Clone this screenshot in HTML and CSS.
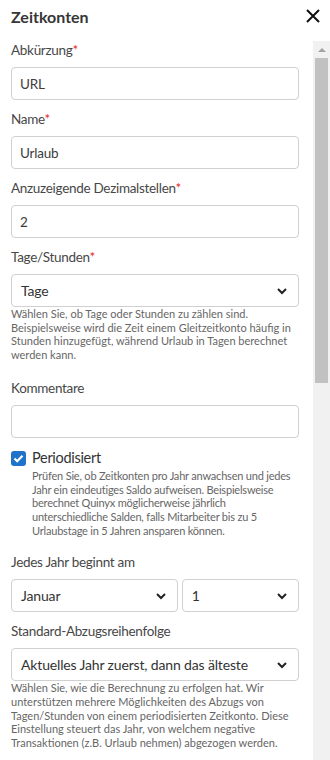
FILE: index.html
```html
<!DOCTYPE html>
<html lang="de">
<head>
<meta charset="utf-8">
<link rel="stylesheet" href="styles.css">
</head>
<body>
<div class="panel">
  <header class="head">
    <h1 class="title">Zeitkonten</h1>
    <svg class="close" width="14" height="14" viewBox="0 0 14 14"><path d="M1 1L13 13M13 1L1 13" stroke="#111" stroke-width="2" fill="none"/></svg>
  </header>
  <div class="body">
    <div class="content">
      <div class="field">
        <label class="label">Abkürzung<span class="req">*</span></label>
        <div class="input">URL</div>
      </div>
      <div class="field">
        <label class="label">Name<span class="req">*</span></label>
        <div class="input">Urlaub</div>
      </div>
      <div class="field">
        <label class="label">Anzuzeigende Dezimalstellen<span class="req">*</span></label>
        <div class="input">2</div>
      </div>
      <div class="field">
        <label class="label">Tage/Stunden<span class="req">*</span></label>
        <div class="input select nomb"><span class="val">Tage</span><svg class="chev" width="12" height="8" viewBox="0 0 12 8"><path d="M2 2L6 6L10 2" stroke="#222" stroke-width="2" fill="none"/></svg></div>
        <p class="help">Wählen Sie, ob Tage oder Stunden zu zählen sind. Beispielsweise wird die Zeit einem Gleitzeitkonto häufig in Stunden hinzugefügt, während Urlaub in Tagen berechnet werden kann.</p>
      </div>
      <div class="field after-help">
        <label class="label">Kommentare</label>
        <div class="input"></div>
      </div>
      <div class="check-row">
        <span class="box"><svg width="11" height="9" viewBox="0 0 11 9"><path d="M1.5 4.5L4.2 7.2L9.5 1.8" stroke="#fff" stroke-width="2.2" fill="none"/></svg></span>
        <div class="check-text">
          <div class="check-label">Periodisiert</div>
          <p class="help">Prüfen Sie, ob Zeitkonten pro Jahr anwachsen und jedes Jahr ein eindeutiges Saldo aufweisen. Beispielsweise berechnet Quinyx möglicherweise jährlich unterschiedliche Salden, falls Mitarbeiter bis zu 5 Urlaubstage in 5 Jahren ansparen können.</p>
        </div>
      </div>
      <div class="field after-check">
        <label class="label">Jedes Jahr beginnt am</label>
        <div class="pair">
          <div class="input select month"><span class="val">Januar</span><svg class="chev" width="12" height="8" viewBox="0 0 12 8"><path d="M2 2L6 6L10 2" stroke="#222" stroke-width="2" fill="none"/></svg></div>
          <div class="input select day"><span class="val">1</span><svg class="chev" width="12" height="8" viewBox="0 0 12 8"><path d="M2 2L6 6L10 2" stroke="#222" stroke-width="2" fill="none"/></svg></div>
        </div>
      </div>
      <div class="field">
        <label class="label">Standard-Abzugsreihenfolge</label>
        <div class="input select nomb"><span class="val">Aktuelles Jahr zuerst, dann das älteste</span><svg class="chev" width="12" height="8" viewBox="0 0 12 8"><path d="M2 2L6 6L10 2" stroke="#222" stroke-width="2" fill="none"/></svg></div>
        <p class="help">Wählen Sie, wie die Berechnung zu erfolgen hat. Wir unterstützen mehrere Möglichkeiten des Abzugs von Tagen/Stunden von einem periodisierten Zeitkonto. Diese Einstellung steuert das Jahr, von welchem negative Transaktionen (z.B. Urlaub nehmen) abgezogen werden.</p>
      </div>
    </div>
    <div class="scrollbar">
      <div class="arrow"></div>
      <div class="thumb"></div>
    </div>
  </div>
</div>
</body>
</html>
```
FILE: styles.css
```css
* { box-sizing: border-box; }
html, body { margin: 0; padding: 0; }
body {
  width: 330px;
  height: 760px;
  overflow: hidden;
  background: #fff;
  font-family: "Lato", "Open Sans", sans-serif;
  color: #474747;
}
.panel { display: flex; flex-direction: column; height: 760px; }
.head {
  display: flex;
  align-items: center;
  justify-content: space-between;
  height: 41px;
  padding: 0 10px 9px 11px;
  flex: none;
}
.title {
  margin: 0;
  font-size: 16px;
  font-weight: 700;
  color: #363636;
}
.body { display: flex; flex: 1; min-height: 0; }
.content {
  flex: 1;
  overflow: hidden;
  padding: 0 14px 0 11px;
}
.scrollbar {
  width: 17px;
  flex: none;
  background: #f1f1f1;
  display: flex;
  flex-direction: column;
  align-items: center;
}
.arrow {
  margin-top: 7px;
  width: 0; height: 0;
  border-left: 4px solid transparent;
  border-right: 4px solid transparent;
  border-bottom: 4px solid #a3a3a3;
}
.thumb {
  margin-top: 6px;
  width: 13px;
  height: 325px;
  background: #c1c1c1;
}
.field { display: flex; flex-direction: column; }
.label {
  display: block;
  font-size: 13.5px;
  letter-spacing: -0.3px;
  line-height: 18px;
  margin: 0 0 8px;
}
.req { color: #e0262b; }
.input {
  height: 33px;
  border: 1px solid #d0d0d0;
  border-radius: 4px;
  padding: 0 8px;
  font-size: 13.5px;
  letter-spacing: -0.2px;
  color: #3c3c3c;
  display: flex;
  align-items: center;
  margin-bottom: 10px;
  flex: none;
}
.select {
  padding: 0 10px 0 9px;
  font-size: 14px;
  letter-spacing: -0.15px;
  color: #333;
  justify-content: space-between;
}
.nomb { margin-bottom: 0; }
.chev { flex: none; }
.help {
  margin: 0;
  font-size: 11px;
  line-height: 13.7px;
  color: #666;
}
.after-help { margin-top: 17px; }
.check-row { display: flex; gap: 6px; margin-top: 1px; }
.box {
  width: 15px; height: 15px;
  border-radius: 3px;
  background: #1f73c9;
  display: flex; align-items: center; justify-content: center;
  flex: none;
  margin-top: 2px;
}
.check-label {
  font-size: 14.5px;
  letter-spacing: -0.3px;
  line-height: 18px;
  color: #333;
}
.check-text .help { margin-top: 2px; letter-spacing: -0.2px; }
.after-check { margin-top: 16px; }
.pair { display: flex; gap: 4px; }
.month { flex: 171 1 0; }
.day { flex: 113 1 0; }
```
